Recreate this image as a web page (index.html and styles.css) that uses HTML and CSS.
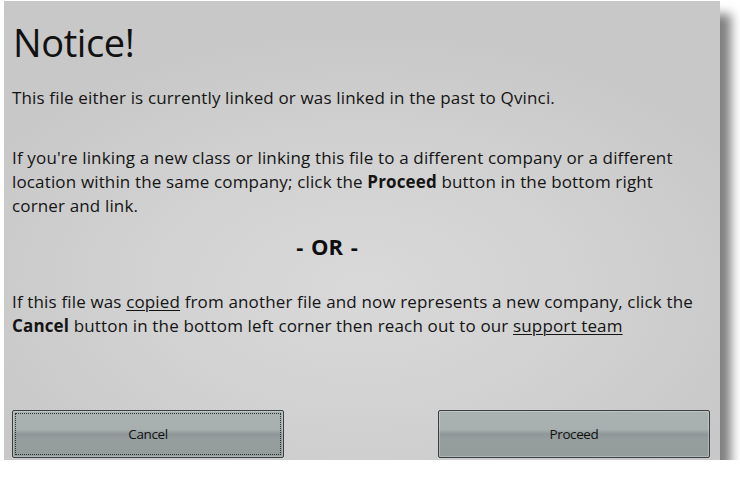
FILE: index.html
```html
<!DOCTYPE html>
<html>
<head>
<meta charset="utf-8">
<link rel="stylesheet" href="styles.css">
</head>
<body>
<div class="dialog">
  <div class="content">
    <h1 class="title">Notice!</h1>
    <p class="para p1">This file either is currently linked or was linked in the past to Qvinci.</p>
    <p class="para p2">If you're linking a new class or linking this file to a different company or a different<br>location within the same company; click the <b>Proceed</b> button in the bottom right<br>corner and link.</p>
    <p class="or">- OR -</p>
    <p class="para p3">If this file was <u>copied</u> from another file and now represents a new company, click the<br><b>Cancel</b> button in the bottom left corner then reach out to our <u>support team</u></p>
  </div>
  <div class="buttons">
    <button class="btn cancel"><span class="focus">Cancel</span></button>
    <button class="btn proceed"><span class="label">Proceed</span></button>
  </div>
</div>
</body>
</html>
```
FILE: styles.css
```css
html, body {
  margin: 0;
  padding: 0;
  background: #ffffff;
}
body {
  font-family: "Open Sans", "Noto Sans", sans-serif;
  color: #111;
}
.dialog {
  margin: 1px 0 0 4px;
  width: 716px;
  height: 459px;
  box-sizing: border-box;
  display: flex;
  flex-direction: column;
  justify-content: space-between;
  background: radial-gradient(ellipse 60% 55% at 50% 62%, #d9d9d9 0%, #d2d2d2 50%, #c8c8c8 100%);
  box-shadow: 11px 13px 10px rgba(0, 0, 0, 0.5);
  padding: 0 10px 2px 8px;
}
.content {
  display: flex;
  flex-direction: column;
  width: 630px;
}
.title {
  margin: 16px 0 0 1px;
  font-size: 38px;
  font-weight: 400;
  line-height: 50px;
  letter-spacing: -0.4px;
  color: #111;
}
.para {
  margin: 0;
  font-size: 17px;
  line-height: 24px;
  letter-spacing: 0.15px;
  color: #141414;
  white-space: nowrap;
}
.para b {
  font-weight: 700;
}
.para u {
  text-decoration-thickness: 1px;
  text-underline-offset: 2px;
}
.p1 {
  margin-top: 19px;
}
.p2 {
  margin-top: 36px;
}
.or {
  margin: 15px 0 0 0;
  text-align: center;
  font-size: 22px;
  font-weight: 700;
  line-height: 26px;
  word-spacing: 2px;
  color: #0e0e0e;
}
.p3 {
  margin-top: 31px;
}
.buttons {
  display: flex;
  justify-content: space-between;
}
.btn {
  width: 272px;
  height: 48px;
  box-sizing: border-box;
  border: 1px solid #3b4142;
  border-radius: 2px;
  padding: 2px;
  background: linear-gradient(to bottom, #aab2b2 0%, #a7afaf 40%, #8f9898 50%, #959d9d 60%, #949c9c 100%);
  font-family: "Open Sans", "Noto Sans", sans-serif;
  font-size: 13.5px;
  letter-spacing: -0.4px;
  color: #111;
  display: flex;
  align-items: stretch;
  box-shadow: inset 0 0 0 1px rgba(255, 255, 255, 0.25);
}
.btn .focus, .btn .label {
  flex: 1;
  display: flex;
  align-items: center;
  justify-content: center;
}
.btn .focus {
  border: 1px dotted #2a2f30;
}
```
